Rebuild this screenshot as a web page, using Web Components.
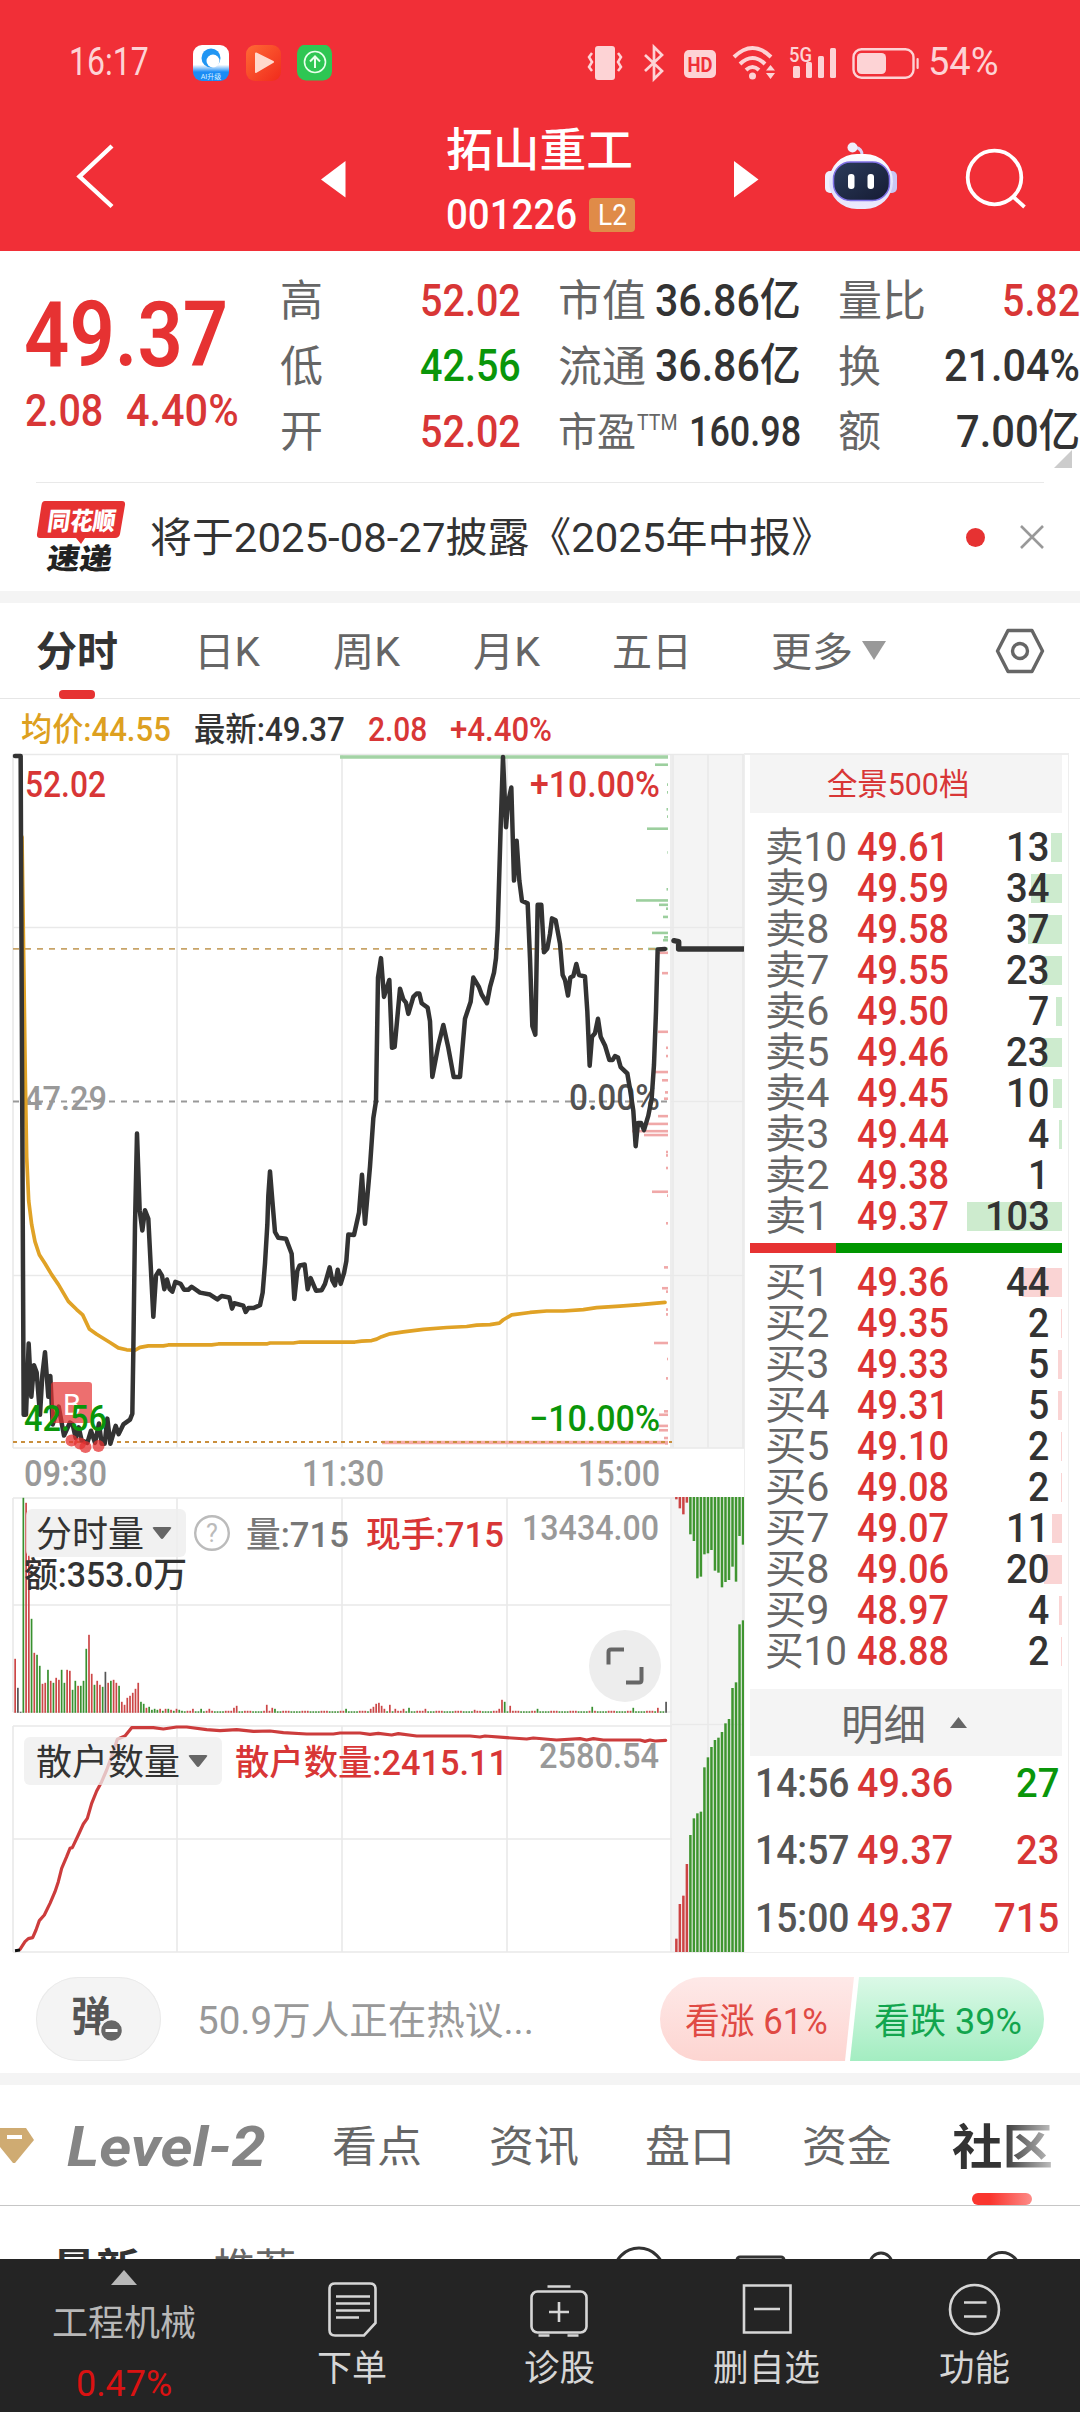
<!DOCTYPE html>
<html lang="zh-CN">
<head>
<meta charset="utf-8">
<title>拓山重工 001226</title>
<style>
  html, body { margin: 0; padding: 0; }
  body {
    width: 1080px;
    height: 2412px;
    overflow: hidden;
    background: #fff;
    color: #333;
    font-family: Roboto, "Noto Sans CJK SC", sans-serif;
  }
</style>
</head>
<body>
<stock-page></stock-page>

<script>
// small helper: every component is a class with one template
function component(name, html, setup) {
  customElements.define(name, class extends HTMLElement {
    constructor() {
      super();
      const shadow = this.attachShadow({ mode: 'open' });
      const template = document.createElement('template');
      template.innerHTML = html;
      shadow.appendChild(template.content.cloneNode(true));
    }
    connectedCallback() {
      if (setup) setup.call(this, this.shadowRoot);
    }
  });
}

// text squeezed to a fixed width: w = width, fs = font size, gap = space before
class FitText extends HTMLElement {
  constructor() {
    super();
    this.attachShadow({ mode: 'open' }).innerHTML = `
      <style>
        :host { display: block; flex: none; line-height: 1.2; white-space: nowrap; }
        span { display: inline-block; transform-origin: 0 50%; }
      </style>
      <span><slot></slot></span>
    `;
  }

  connectedCallback() {
    const w = Number(this.getAttribute('w'));
    this.style.width = w + 'px';
    this.style.fontSize = this.getAttribute('fs') + 'px';
    if (this.hasAttribute('gap')) this.style.marginLeft = this.getAttribute('gap') + 'px';
    const span = this.shadowRoot.querySelector('span');
    const natural = span.offsetWidth;
    if (natural) span.style.transform = `scaleX(${w / natural})`;
  }
}
customElements.define('fit-text', FitText);

component('status-bar', `
  <style>
    :host { display: flex; align-items: center; height: 125px; color: #fdd3d5; }
    svg { display: block; flex: none; }
  </style>
  <fit-text w="80" fs="38" gap="69">16:17</fit-text>
  <svg width="140" height="36" viewBox="193 45 140 36" style="margin-left:44px">
    <defs>
      <linearGradient id="b" x2="0" y2="1"><stop offset=".55" stop-color="#fff"/><stop offset=".75" stop-color="#1b8cf5"/></linearGradient>
      <linearGradient id="o" x2="1" y2="1"><stop stop-color="#ff6a35"/><stop offset="1" stop-color="#f02a1c"/></linearGradient>
    </defs>
    <rect x="193" y="45" width="36" height="36" rx="9" fill="url(#b)"/>
    <circle cx="211" cy="58" r="9.5" fill="#2196f3"/>
    <circle cx="213" cy="61" r="6.5" fill="#fff"/>
    <text x="211" y="79" font-size="7" text-anchor="middle" fill="#d8efff">AI升级</text>
    <rect x="246" y="45" width="35" height="36" rx="9" fill="url(#o)"/>
    <path d="M256 53.500 L273 62 L256 72 Z" fill="#ffd9cc" stroke="#ffd9cc" stroke-width="2" stroke-linejoin="round"/>
    <rect x="297" y="44.500" width="35" height="36" rx="9" fill="#2ec653"/>
    <circle cx="315" cy="62" r="10.500" fill="none" stroke="#e8ffec" stroke-width="1.600"/>
    <path d="M315 68V56.500M310 61.500L315 56.500L320 61.500" fill="none" stroke="#e8ffec" stroke-width="2"/>
  </svg>
  <svg width="336" height="40" viewBox="585 42 336 40" style="margin-left:252px" fill="#fdd3d5">
    <rect x="595" y="45" width="20" height="34" rx="3"/>
    <path d="M592 52l-3 4 3 5-3 5 3 4M618 52l3 4-3 5 3 5-3 4" fill="none" stroke="#fdd3d5" stroke-width="2.500"/>
    <path d="M645 54L662 70L654 78V46L662 54L645 70" fill="none" stroke="#fdd3d5" stroke-width="2.700"/>
    <rect x="684" y="49" width="32" height="28" rx="5"/>
    <text x="687.500" y="71" font-size="21" font-weight="700" fill="#f03037" textLength="25" lengthAdjust="spacingAndGlyphs">HD</text>
    <g fill="none" stroke="#fdd3d5" stroke-width="4">
      <path d="M734 56Q752.500 38 771 56M740 63Q752.500 51 765 63M746 69Q752.500 63 759 69"/>
    </g>
    <circle cx="752.500" cy="75" r="3.500"/>
    <path d="M766 69.500L770.500 64L775 69.500ZM766 72L775 72L770.500 78Z"/>
    <text x="789" y="61" font-size="20" font-weight="500" textLength="23" lengthAdjust="spacingAndGlyphs">5G</text>
    <rect x="793" y="65" width="7" height="12" rx="1.500"/><rect x="806" y="61" width="6" height="16" rx="1.500"/>
    <rect x="818" y="55" width="6" height="22" rx="1.500"/><rect x="830" y="47" width="6" height="30" rx="1.500"/>
    <rect x="853.500" y="48.200" width="60" height="28.500" rx="8" fill="none" stroke="#fdd3d5" stroke-width="2.400"/>
    <rect x="857" y="52" width="29" height="21" rx="4.500"/>
    <rect x="916.500" y="57" width="2.200" height="11" rx="1"/>
  </svg>
  <fit-text w="71" fs="38" gap="7">54%</fit-text>
`);

component('nav-header', `
  <style>
    :host { display: flex; height: 126px; color: #fff; align-items: flex-start; }
    svg { display: block; flex: none; }
    .title { display: flex; flex-direction: column; width: 192px; margin-left: 101px; }
    .code { display: flex; align-items: center; margin-top: 13px; height: 34px; }
    .badge {
      display: flex; align-items: center; justify-content: center;
      width: 46px; height: 34px; margin-left: 12px; border-radius: 4px; background: #e08b48;
    }
    fit-text { font-weight: 500; }
    .badge fit-text { font-weight: 400; }
  </style>
  <svg width="44" height="70" viewBox="72 142 44 70" style="margin:17px 0 0 72px"><path d="M112 146L79.500 176.500L112 206.500" fill="none" stroke="#fff" stroke-width="4.400"/></svg>
  <svg width="25" height="37" viewBox="0 0 25 37" style="margin:36px 0 0 205px"><path d="M24.500 0V36.500L0 18.500Z" fill="#fff"/></svg>
  <div class="title">
    <fit-text w="187" fs="46" gap="-1" style="line-height:69px;height:69px;margin-top:-9px">拓山重工</fit-text>
    <div class="code"><fit-text w="131" fs="42" gap="-1">001226</fit-text><span class="badge"><fit-text w="29" fs="29">L2</fit-text></span></div>
  </div>
  <svg width="25" height="37" viewBox="0 0 25 37" style="margin:36px 0 0 95px"><path d="M0 0V36.500L24.500 18.500Z" fill="#fff"/></svg>
  <svg width="76" height="70" viewBox="823 141 76 70" style="margin:16px 0 0 64px">
    <defs>
      <linearGradient id="h" x2="0" y2="1"><stop stop-color="#fff"/><stop offset=".6" stop-color="#dfe0fb"/><stop offset="1" stop-color="#eceafd"/></linearGradient>
      <linearGradient id="f" x2="1" y2="1"><stop stop-color="#2c3c5c"/><stop offset="1" stop-color="#151b33"/></linearGradient>
    </defs>
    <path d="M862 156Q863 149 855 147" fill="none" stroke="#d9d5f8" stroke-width="3"/>
    <circle cx="852.500" cy="147.500" r="5" fill="#efeffd"/>
    <rect x="825" y="171" width="11" height="22" rx="5" fill="#f0effd"/><rect x="886" y="171" width="11" height="22" rx="5" fill="#c9c6f3"/>
    <rect x="829" y="154" width="64" height="55" rx="28" fill="url(#h)"/>
    <rect x="833.500" y="162" width="56" height="38.500" rx="17" fill="url(#f)" stroke="#8070e6" stroke-width="1.500"/>
    <rect x="848" y="174" width="6.500" height="15" rx="3" fill="#fff"/><rect x="867.500" y="174" width="6.500" height="15" rx="3" fill="#fff"/>
  </svg>
  <svg width="66" height="66" viewBox="963 146 66 66" style="margin:21px 0 0 64px" fill="none" stroke="#fff" stroke-width="3.800">
    <circle cx="994.500" cy="177.500" r="26.800"/><path d="M1013 196.500L1024.500 207"/>
  </svg>
`);

component('quote-cell', `
  <style>
    :host { display: flex; align-items: center; justify-content: space-between; }
    ::slotted(fit-text:last-child) { font-weight: 500; }
    ::slotted(fit-text:first-child) { color: #666; font-weight: 400; padding: 3px 0 0 1px; }
  </style>
  <slot></slot>
`);

component('quote-panel', `
  <style>
    :host { display: flex; height: 232px; position: relative; }
    .price { width: 254px; padding-left: 26px; color: #e63232; box-sizing: border-box; }
    .now { font-weight: 600; margin-top: 31px; }
    .change { display: flex; font-weight: 500; margin-top: -5px; color: #d83636; }
    .grid {
      display: grid; grid-template-columns: 242px 244px 243px; column-gap: 36px;
      grid-auto-rows: 65.500px; margin-left: 26px; margin-top: 17px; height: 197px;
    }
    .r { color: #d83636; } .g { color: #0a960a; }
    .ttm { display: flex; margin-right: auto; }
    .corner { position: absolute; right: 8px; bottom: 15px; }
    .rule { position: absolute; left: 36px; right: 36px; bottom: 0; height: 1px; background: #e9e9e9; }
  </style>
  <div class="price">
    <fit-text class="now" w="204" fs="90" gap="-2">49.37</fit-text>
    <div class="change"><fit-text w="78" fs="44" gap="-1">2.08</fit-text><fit-text w="113" fs="44" gap="23">4.40%</fit-text></div>
  </div>
  <div class="grid">
    <quote-cell><fit-text w="43" fs="43">高</fit-text><fit-text class="r" w="101" fs="45">52.02</fit-text></quote-cell>
    <quote-cell><fit-text w="88" fs="43">市值</fit-text><fit-text w="146" fs="45">36.86亿</fit-text></quote-cell>
    <quote-cell><fit-text w="88" fs="43">量比</fit-text><fit-text class="r" w="78" fs="45">5.82</fit-text></quote-cell>
    <quote-cell><fit-text w="43" fs="43">低</fit-text><fit-text class="g" w="101" fs="45">42.56</fit-text></quote-cell>
    <quote-cell><fit-text w="88" fs="43">流通</fit-text><fit-text w="146" fs="45">36.86亿</fit-text></quote-cell>
    <quote-cell><fit-text w="43" fs="43">换</fit-text><fit-text w="136" fs="45">21.04%</fit-text></quote-cell>
    <quote-cell><fit-text w="43" fs="43">开</fit-text><fit-text class="r" w="101" fs="45">52.02</fit-text></quote-cell>
    <quote-cell><fit-text w="78" fs="40">市盈</fit-text><span class="ttm"><fit-text w="41" fs="22" gap="1" style="margin-top:-17px;color:#666">TTM</fit-text></span><fit-text w="112" fs="43">160.98</fit-text></quote-cell>
    <quote-cell><fit-text w="43" fs="43">额</fit-text><fit-text w="124" fs="45">7.00亿</fit-text></quote-cell>
  </div>
  <svg class="corner" width="18" height="18"><path d="M18 0V18H0Z" fill="#ccc"/></svg>
  <div class="rule"></div>
`);

component('notice-bar', `
  <style>
    :host { display: flex; align-items: center; height: 108px; border-bottom: 12px solid #f4f4f4; }
    svg { display: block; flex: none; overflow: visible; }
    i { width: 19px; height: 19px; border-radius: 50%; background: #e63232; margin-left: 133px; }
    fit-text { padding-top: 4px; }
  </style>
  <svg width="90" height="80" viewBox="36 497 90 80" style="margin-left:36px">
    <path d="M45 501H122Q125.500 501 125 505L120 534Q119 538 115 538H85L81 544L76 538H40Q36.500 538 37 534L41.500 505Q42 501 45 501Z" fill="#e63232"/>
    <g transform="skewX(-8)" font-weight="900">
      <text x="121" y="530" font-size="25" fill="#fff" textLength="68" lengthAdjust="spacingAndGlyphs">同花顺</text>
      <text x="126" y="569" font-size="29" fill="#222" textLength="65" lengthAdjust="spacingAndGlyphs">速递</text>
    </g>
  </svg>
  <fit-text w="683" fs="41" gap="24">将于2025-08-27披露《2025年中报》</fit-text>
  <i></i>
  <svg width="26" height="26" viewBox="0 0 26 26" style="margin-left:34px"><path d="M2 2L24 24M24 2L2 24" stroke="#999" stroke-width="2.600"/></svg>
`);

component('period-tabs', `
  <style>
    :host { display: flex; align-items: center; height: 95px; border-bottom: 1px solid #e6e6e6; color: #666; }
    fit-text { padding-top: 5px; }
    .on { position: relative; color: #333; font-weight: 700; }
    .on::after { content: ""; position: absolute; left: 23px; bottom: -21px; width: 36px; height: 9px; border-radius: 4px; background: #e63232; }
    svg { display: block; flex: none; }
  </style>
  <fit-text class="on" w="82" fs="41" gap="36">分时</fit-text>
  <fit-text w="66" fs="40" gap="76">日K</fit-text>
  <fit-text w="67" fs="40" gap="73">周K</fit-text>
  <fit-text w="67" fs="40" gap="73">月K</fit-text>
  <fit-text w="80" fs="40" gap="72">五日</fit-text>
  <fit-text w="82" fs="40" gap="79">更多</fit-text>
  <svg width="24" height="19" style="margin-left:9px"><path d="M0 0H24L12 19Z" fill="#999"/></svg>
  <svg width="50" height="46" viewBox="-25 -23 50 46" style="margin-left:109px" fill="none" stroke="#666" stroke-width="3.400">
    <path d="M-12 -20.500H12L22.500 0L12 20.500H-12L-22.500 0Z" stroke-linejoin="round"/><circle r="7.500"/>
  </svg>
`);

component('price-legend', `
  <style>
    :host { display: flex; align-items: center; height: 54px; padding-top: 7px; box-sizing: border-box; }
    fit-text { font-weight: 500; }
  </style>
  <fit-text w="150" fs="33" gap="21" style="color:#dda020">均价:44.55</fit-text>
  <fit-text w="151" fs="33" gap="23">最新:49.37</fit-text>
  <fit-text w="59" fs="33" gap="23" style="color:#d83636">2.08</fit-text>
  <fit-text w="102" fs="33" gap="23" style="color:#d83636">+4.40%</fit-text>
`);

const PRICE = '45,33 62,33 63,200 67,800 71,1392 78,1392 86,1245 94,1355 102,1290 110,1305 120,1392 127,1310 135,1263 145,1355 151,1312 158,1412 166,1395 176,1375 192,1435 210,1408 218,1412 227,1440 236,1418 245,1445 262,1450 273,1425 285,1450 297,1410 305,1452 314,1452 322,1400 331,1452 347,1415 356,1432 370,1412 390,1402 397,1390 400,1260 405,1000 411,812 419,970 427,1012 435,970 445,988 460,1190 468,1105 477,1095 486,1105 493,1133 501,1113 509,1133 517,1138 526,1118 542,1122 552,1134 565,1134 575,1128 600,1140 630,1144 652,1154 665,1147 688,1150 696,1173 703,1162 730,1167 737,1180 745,1172 760,1172 780,1166 788,1140 795,1080 802,1000 805,940 810,890 817,950 825,1015 835,1027 858,1029 875,1060 883,1153 892,1095 899,1084 914,1082 923,1133 932,1110 948,1136 965,1135 975,1122 989,1088 997,1115 1005,1125 1013,1093 1022,1122 1032,1100 1039,1075 1045,1020 1062,1021 1077,975 1086,897 1095,998 1110,880 1120,780 1128,745 1134,490 1143,450 1152,530 1168,495 1176,635 1184,633 1200,513 1210,535 1218,542 1225,565 1240,530 1250,523 1258,523 1265,543 1283,552 1290,580 1297,695 1315,630 1330,588 1345,635 1361,695 1380,695 1395,575 1412,540 1420,490 1437,510 1445,525 1461,543 1470,510 1482,480 1488,450 1493,390 1502,180 1509,35 1518,180 1524,130 1534,98 1542,290 1550,208 1558,290 1566,332 1583,337 1590,450 1597,590 1606,608 1613,340 1624,340 1632,438 1642,430 1650,400 1656,368 1667,372 1680,420 1688,485 1695,495 1704,527 1711,490 1720,487 1729,462 1737,485 1755,488 1762,560 1769,672 1776,612 1785,605 1794,575 1802,612 1815,630 1828,660 1838,660 1845,652 1854,655 1862,675 1882,688 1890,720 1900,765 1907,838 1914,790 1923,790 1932,805 1945,775 1955,740 1962,670 1968,560 1973,432 1995,431';
const AVERAGE = '66,200 70,400 76,700 80,860 86,950 95,1000 105,1035 118,1062 135,1080 155,1103 175,1123 205,1158 230,1175 248,1186 268,1215 290,1226 330,1243 355,1254 380,1258 405,1259 420,1253 445,1250 490,1250 505,1248 635,1248 655,1246 800,1246 810,1244 880,1244 900,1242 1065,1242 1085,1240 1115,1239 1130,1236 1145,1231 1170,1225 1210,1221 1270,1216 1340,1212 1400,1210 1430,1207 1470,1206 1498,1203 1510,1196 1535,1186 1590,1181 1640,1178 1690,1178 1750,1175 1790,1171 1860,1168 1920,1165 1995,1160';
const RETAIL = '60,1378 75,1355 85,1346 98,1343 108,1320 118,1292 133,1275 150,1240 165,1205 175,1175 185,1135 200,1100 210,1075 217,1073 235,1035 250,1002 262,985 275,940 290,903 305,875 320,840 340,785 352,748 375,738 395,713 460,713 490,717 530,711 560,711 620,719 660,722 710,719 760,724 810,723 850,728 920,732 1000,732 1020,729 1080,729 1110,733 1135,730 1175,735 1195,731 1250,738 1410,738 1440,741 1455,738 1520,743 1580,747 1600,744 1670,750 1740,746 1760,750 1780,746 1810,750 1920,750 1935,754 1950,750 1965,753 1997,751';

// resting orders on the right edge of the chart: [y, length]
const DEPTH_SELL = [[51,13],[92,1],[108,1],[143,1.5],[158,1],[183,21],[232,.6],[308,1.5],[331,32],[340,9],[348,2],[365,5],[398,16],[407,4],[413,5],[431,20]];
const DEPTH_BUY = [[439,10],[481,6],[602,10],[635,2],[652,2],[685,13],[702,6],[727,3],[740,4],[776,10],[792,20],[807,36],[815,24],[850,2],[857,2],[883,2],[932,16],[940,1],[997,2],[1088,4],[1131,6],[1138,2],[1175,2],[1185,2],[1244,14],[1277,1],[1317,2],[1385,4],[1392,9],[1415,12],[1424,9],[1440,4],[1451,3]];

// per minute volume, height and colour
const VOLUME = '54r 25k 1k 215g 210r 158r 94g 60r 58g 47g 29r 30r 43g 32r 30g 35r 33r 43g 30g 43r 42r 23g 32g 27r 27g 32g 64g 78r 39r 28g 32r 28r 26g 41k 30r 32g 33r 30r 27g 11r 8r 15r 17r 20r 24r 30r 11g 9g 5r 6g 3g 4g 3g 4r 2g 4r 4g 3r 2g 4r 3g 2g'.split(' ');
const SPIKES = { 65: '4r', 68: '4g', 71: '4r', 80: '5r', 81: '7r', 92: '8r', 94: '5r', 95: '4g', 121: '4g', 130: '4r', 131: '6r', 132: '9r', 133: '10r', 134: '7r', 135: '4r', 137: '8r', 139: '4r', 142: '4r', 144: '5g', 150: '4r', 168: '3r', 177: '4r', 178: '13r', 179: '11g', 181: '7r', 191: '4g', 211: '6g', 226: '5g', 235: '5r', 238: '11k' };
const TINTS = { r: '#cc4747', g: '#38902f', k: '#555' };

const UPPER = [28,55,73,38,133,153,265,260,193,190,180,242,248,292,276,270,230,275,138,164];
const LOWER = [1346,1242,1217,1122,1035,985,970,965,832,802,771,750,743,726,700,687,594,577,403,391];

component('intraday-chart', `
  <style>
    :host { display: block; flex: none; width: 744px; height: 1200px; }
    svg { display: block; }
    .grid path { stroke: #e9e9e9; stroke-width: 1.600; fill: none; }
    .line { fill: none; stroke-linejoin: round; stroke-linecap: round; vector-effect: non-scaling-stroke; }
    text { font-weight: 500; }
    .r { fill: #d83636; } .g { fill: #0a960a; } .m { fill: #999; }
  </style>
  <svg width="744" height="1200" viewBox="0 753 744 1200">
    <rect x="672" y="755" width="72" height="693" fill="#f4f4f4"/>
    <rect x="672" y="1497" width="72" height="455" fill="#f4f4f4"/>
    <g class="grid">
      <path d="M13 754.500H744M13 927.500H744M671 1101.500H744M13 1275.500H744M13 1448H744M13 754V1448M177 754V1448M342 754V1448M507 754V1448M671 754V1448M673 754V1448M708 754V1448M743 754V1448"/>
      <path d="M13 1498H744M13 1605H672M13 1712H672M13 1726H672M672 1724.500H744M13 1839H672M13 1952H744M13 1498V1712M177 1498V1712M342 1498V1712M507 1498V1712M13 1726V1952M177 1726V1952M342 1726V1952M507 1726V1952M671 1498V1952M708 1498V1952M743 1498V1952"/>
    </g>
    <path d="M340 757H668" stroke="#a3d3a5" stroke-width="3.500"/>
    <path d="M382 1442.500H668" stroke="#f6aaa6" stroke-width="3.500"/>
    <g id="depth"></g>
    <g fill="none" stroke-width="1.800">
      <path d="M13 948.800H668" stroke="#c8a468" stroke-dasharray="6 6"/>
      <path d="M13 1101.500H668" stroke="#999" stroke-dasharray="6 6"/>
      <path d="M13 1442H672" stroke="#c98f3d" stroke-dasharray="4 4"/>
    </g>
    <text class="m" x="24" y="1110" font-size="34" textLength="83" lengthAdjust="spacingAndGlyphs">47.29</text>
    <g transform="translate(0 740) scale(.33333 .48473)">
      <polyline class="line" points="${AVERAGE}" stroke="#e0a226" stroke-width="3.700"/>
      <polyline class="line" points="${PRICE}" stroke="#333" stroke-width="4.500"/>
      <polyline class="line" points="2022,414 2036,416 2036,431 2230,431" stroke="#333" stroke-width="5.500"/>
    </g>
    <g fill="#e63232" fill-opacity=".75">
      <rect x="51" y="1382" width="41" height="41" rx="3" fill-opacity=".7"/>
      <circle cx="71.500" cy="1440.500" r="6"/><circle cx="80" cy="1443.500" r="6"/><circle cx="85.500" cy="1447" r="6"/><circle cx="98.500" cy="1446" r="6"/>
    </g>
    <text x="63" y="1415" font-size="30" textLength="18" lengthAdjust="spacingAndGlyphs" fill="#fff" style="font-weight:400">B</text>
    <g font-size="36">
      <text class="r" x="25" y="797" textLength="81" lengthAdjust="spacingAndGlyphs">52.02</text>
      <text class="g" x="24" y="1431" textLength="83" lengthAdjust="spacingAndGlyphs">42.56</text>
      <text class="r" x="530" y="797" textLength="130" lengthAdjust="spacingAndGlyphs">+10.00%</text>
      <text x="569" y="1110" textLength="91" fill="#333" fill-opacity=".85" lengthAdjust="spacingAndGlyphs">0.00%</text>
      <text class="g" x="529" y="1431" textLength="131" lengthAdjust="spacingAndGlyphs">−10.00%</text>
      <text class="m" x="24" y="1486" textLength="83" lengthAdjust="spacingAndGlyphs">09:30</text>
      <text class="m" x="302" y="1486" textLength="82" lengthAdjust="spacingAndGlyphs">11:30</text>
      <text class="m" x="578" y="1486" textLength="82" lengthAdjust="spacingAndGlyphs">15:00</text>
    </g>

    <g id="volume"></g>
    <rect x="26" y="1509" width="160" height="48" rx="6" fill="#eeeeee" fill-opacity=".8"/>
    <g font-size="35">
      <text x="36" y="1547" font-size="36" textLength="108" lengthAdjust="spacingAndGlyphs" fill="#333" style="font-weight:400">分时量</text>
      <text x="246" y="1547" textLength="103" lengthAdjust="spacingAndGlyphs" fill="#777">量:715</text>
      <text class="r" x="366" y="1547" textLength="138" lengthAdjust="spacingAndGlyphs">现手:715</text>
      <text class="m" x="522" y="1540" textLength="137" lengthAdjust="spacingAndGlyphs">13434.00</text>
      <text x="24" y="1587" textLength="163" lengthAdjust="spacingAndGlyphs" fill="#333">额:353.0万</text>
    </g>
    <path d="M154 1527H170Q172 1527 171 1528.500L163.500 1538Q162 1540 160.500 1538L153 1528.500Q152 1527 154 1527Z" fill="#666"/>
    <circle cx="212" cy="1533" r="16.800" fill="none" stroke="#bbb" stroke-width="2.400"/>
    <text x="212" y="1542" font-size="25" text-anchor="middle" fill="#bbb" style="font-weight:400">?</text>
    <circle cx="625" cy="1666" r="36" fill="#ededed"/>
    <path d="M608.500 1664.500V1652Q608.500 1649.500 611 1649.500H624M641.500 1667V1680Q641.500 1682.500 639 1682.500H626" fill="none" stroke="#666" stroke-width="4"/>

    <g transform="translate(0 1490) scale(.33333)">
      <polyline class="line" points="${RETAIL}" stroke="#cc3c3c" stroke-width="3.200"/>
      <path d="M45 1382L60 1380" stroke="#111" stroke-width="9"/>
    </g>
    <rect x="24" y="1737" width="198" height="48" rx="6" fill="#eeeeee" fill-opacity=".75"/>
    <text x="36" y="1775" font-size="36" textLength="144" lengthAdjust="spacingAndGlyphs" fill="#333" style="font-weight:400">散户数量</text>
    <path d="M190 1755H206Q208 1755 207 1756.500L199.500 1766Q198 1768 196.500 1766L189 1756.500Q188 1755 190 1755Z" fill="#666"/>
    <text class="r" x="235" y="1775" font-size="35" textLength="273" lengthAdjust="spacingAndGlyphs">散户数量:2415.11</text>
    <text class="m" x="539" y="1768" font-size="35" textLength="120" lengthAdjust="spacingAndGlyphs">2580.54</text>
    <g id="flow"></g>
  </svg>
`, function (root) {
  const bar = (x, y, w, h, fill) => `<rect x="${x}" y="${y}" width="${w}" height="${h}" fill="${fill}"/>`;
  const side = (rows, fill) => rows.map(([y, len]) => bar(668 - len, 738.700 + y / 2.063, len, 2.600, fill)).join('');
  root.getElementById('depth').innerHTML = side(DEPTH_SELL, '#9ccf9e') + side(DEPTH_BUY, '#f0a8a8');

  let out = '';
  for (let i = 0; i < 239; i++) {
    const item = VOLUME[i] || SPIKES[i] || (i % 7 < 3 ? '2r' : '1.5g');
    const h = parseFloat(item);
    out += bar(14.300 + i * 2.735, 1712.800 - h, 1.700, h, TINTS[item.slice(-1)]);
  }
  root.getElementById('volume').innerHTML = out;

  root.getElementById('flow').innerHTML = UPPER.map((end, i) => {
    const x = 675.100 + i * 3.510;
    const fill = i < 4 ? '#cc4444' : '#3f9530';
    const top = 1490 + LOWER[i] / 3;
    return bar(x, 1497, 2.500, end / 3 - 7, fill) + bar(x, top, 2.500, 1952 - top, fill);
  }).join('');
});

class OrderRow extends HTMLElement {
  constructor() {
    super();
    this.attachShadow({ mode: 'open' });
  }

  connectedCallback() {
    const label = this.getAttribute('label');
    const qty = this.getAttribute('qty');
    const w = label.length > 2 ? 82 : 64;
    this.shadowRoot.innerHTML = `
      <style>
        :host { display: grid; grid-template-columns: 92px 94px 1fr; align-items: center; height: 41px; padding-left: 15px; }
        fit-text { line-height: 1; }
        .label { color: #666; }
        .price { color: #dc3434; font-weight: 500; }
        .qty {
          display: flex; justify-content: flex-end; align-items: center; height: 29px;
          padding-right: 13px; font-weight: 500;
          background: linear-gradient(var(--bar), var(--bar)) no-repeat right / ${this.getAttribute('bar')}px 100%;
        }
      </style>
      <fit-text class="label" w="${w}" fs="40">${label}</fit-text>
      <fit-text class="price" w="92" fs="40">${this.getAttribute('price')}</fit-text>
      <div class="qty"><fit-text w="${qty.length * 21.500}" fs="40">${qty}</fit-text></div>
    `;
  }
}
customElements.define('order-row', OrderRow);

component('trade-row', `
  <style>
    :host { display: flex; align-items: center; height: 67.5px; font-weight: 500; padding-left: 5px; }
  </style>
  <slot></slot>
`);

component('order-book', `
  <style>
    :host {
      display: block; box-sizing: border-box; width: 325px; height: 1200px;
      border: 1px solid #eee; border-top: 2px solid #eee; padding: 0 6px 0 5px; overflow: hidden;
    }
    .head { display: flex; align-items: center; justify-content: center; background: #f4f4f4; }
    .full { height: 58px; color: #d83636; padding-right: 16px; }
    .full fit-text { padding-top: 2px; }
    .sell { --bar: #cdebce; margin-top: 14px; }
    .buy { --bar: #fad4d4; margin-top: 9px; }
    .ratio { display: flex; height: 10px; margin-top: 6px; background: #009600; }
    .ratio i { width: 86px; background: #e63232; }
    .detail { height: 67px; margin-top: 17px; color: #666; padding-right: 4px; box-sizing: border-box; }
    .detail fit-text { padding-top: 8px; }
    .trades { margin-top: -6px; color: #555; }
    .r { color: #d83636; } .g { color: #0a960a; }
  </style>
  <div class="head full"><fit-text w="142" fs="31">全景500档</fit-text></div>
  <div class="sell">
    <order-row label="卖10" price="49.61" qty="13" bar="11"></order-row>
    <order-row label="卖9" price="49.59" qty="34" bar="31"></order-row>
    <order-row label="卖8" price="49.58" qty="37" bar="34"></order-row>
    <order-row label="卖7" price="49.55" qty="23" bar="20"></order-row>
    <order-row label="卖6" price="49.50" qty="7" bar="6"></order-row>
    <order-row label="卖5" price="49.46" qty="23" bar="20"></order-row>
    <order-row label="卖4" price="49.45" qty="10" bar="9"></order-row>
    <order-row label="卖3" price="49.44" qty="4" bar="3"></order-row>
    <order-row label="卖2" price="49.38" qty="1" bar="0"></order-row>
    <order-row label="卖1" price="49.37" qty="103" bar="95"></order-row>
  </div>
  <div class="ratio"><i></i></div>
  <div class="buy">
    <order-row label="买1" price="49.36" qty="44" bar="40"></order-row>
    <order-row label="买2" price="49.35" qty="2" bar="1"></order-row>
    <order-row label="买3" price="49.33" qty="5" bar="4"></order-row>
    <order-row label="买4" price="49.31" qty="5" bar="4"></order-row>
    <order-row label="买5" price="49.10" qty="2" bar="1"></order-row>
    <order-row label="买6" price="49.08" qty="2" bar="1"></order-row>
    <order-row label="买7" price="49.07" qty="11" bar="10"></order-row>
    <order-row label="买8" price="49.06" qty="20" bar="18"></order-row>
    <order-row label="买9" price="48.97" qty="4" bar="3"></order-row>
    <order-row label="买10" price="48.88" qty="2" bar="1"></order-row>
  </div>
  <div class="head detail">
    <fit-text w="85" fs="42">明细</fit-text>
    <svg width="17" height="11" style="margin-left:24px"><path d="M0 11L8.500 0L17 11Z" fill="#666"/></svg>
  </div>
  <div class="trades">
    <trade-row><fit-text w="94" fs="40">14:56</fit-text><fit-text class="r" w="96" fs="40" gap="8">49.36</fit-text><fit-text class="g" w="43" fs="40" gap="63">27</fit-text></trade-row>
    <trade-row><fit-text w="94" fs="40">14:57</fit-text><fit-text class="r" w="96" fs="40" gap="8">49.37</fit-text><fit-text class="r" w="43" fs="40" gap="63">23</fit-text></trade-row>
    <trade-row><fit-text w="94" fs="40">15:00</fit-text><fit-text class="r" w="96" fs="40" gap="8">49.37</fit-text><fit-text class="r" w="65" fs="40" gap="41">715</fit-text></trade-row>
  </div>
`);

component('talk-bar', `
  <style>
    :host { display: flex; height: 96px; border-bottom: 12px solid #f4f4f4; padding-top: 24px; }
    .pill { width: 125px; height: 84px; border-radius: 42px; background: #f4f4f4; box-shadow: inset 0 0 0 1px #eaeaea; margin-left: 36px; }
    .talk { color: #999; line-height: 88px; }
    .vote { display: flex; width: 384px; height: 84px; margin-left: 126px; border-radius: 42px; overflow: hidden; }
    .up, .down { display: flex; width: 194px; }
    .up { color: #e04a44; background: linear-gradient(#fee9e8, #fdd5d1); clip-path: polygon(0 0, 100% 0, 185px 100%, 0 100%); }
    .down { margin-left: -4px; color: #12a54e; background: linear-gradient(#dbf9e7, #a3edc1); clip-path: polygon(9px 0, 100% 0, 100% 100%, 0 100%); }
    .vote fit-text { line-height: 90px; }
  </style>
  <div class="pill">
    <svg width="125" height="84" viewBox="36 1977 125 84">
      <text x="71" y="2031" font-size="41" font-weight="700" fill="#555" textLength="40" lengthAdjust="spacingAndGlyphs">弹</text>
      <circle cx="111.500" cy="2030.500" r="11.500" fill="#666" stroke="#f4f4f4" stroke-width="2.500"/>
      <path d="M105.500 2030.500H117.500" stroke="#fff" stroke-width="3"/>
    </svg>
  </div>
  <fit-text class="talk" w="337" fs="39" gap="36">50.9万人正在热议...</fit-text>
  <div class="vote">
    <div class="up"><fit-text w="143" fs="36" gap="25">看涨 61%</fit-text></div>
    <div class="down"><fit-text w="148" fs="36" gap="24">看跌 39%</fit-text></div>
  </div>
`);

component('section-tabs', `
  <style>
    :host { display: flex; align-items: center; height: 120px; border-bottom: 1px solid #c6c6c6; color: #666; }
    fit-text { padding-top: 6px; }
    .level { font-weight: 700; font-style: italic; color: #858585; }
    .tab { position: relative; margin-left: 60px; }
    .tab::after { content: ""; position: absolute; left: 20px; bottom: -28px; width: 60px; height: 12px; border-radius: 6px; background: linear-gradient(90deg, #fa352e 30%, #fd8c88); }
    .tab::before { content: ""; position: absolute; z-index: 1; inset: 0 0 0 50px; background: linear-gradient(90deg, rgba(255,255,255,0), rgba(255,255,255,.7)); }
    .tab fit-text { font-weight: 700; color: #333; }
    svg { display: block; flex: none; }
  </style>
  <svg width="34" height="37" viewBox="0 0 34 37"><path d="M0 1H26L34 13L15 36H13L0 20Z" fill="#cfab72"/><path d="M7 10H22" stroke="#fff" stroke-width="4"/></svg>
  <fit-text class="level" w="199" fs="56" gap="33">Level-2</fit-text>
  <fit-text w="90" fs="43" gap="66">看点</fit-text>
  <fit-text w="90" fs="43" gap="67">资讯</fit-text>
  <fit-text w="90" fs="43" gap="66">盘口</fit-text>
  <fit-text w="90" fs="43" gap="67">资金</fit-text>
  <div class="tab"><fit-text w="101" fs="48">社区</fit-text></div>
`);

component('feed-head', `
  <style>
    :host { display: flex; height: 53px; overflow: hidden; }
    fit-text { margin-top: 39px; }
    .new { font-weight: 700; }
    .rec { color: #666; }
    svg { display: block; flex: none; margin-left: 312px; }
  </style>
  <fit-text class="new" w="88" fs="42" gap="52">最新</fit-text>
  <fit-text class="rec" w="82" fs="40" gap="74">推荐</fit-text>
  <svg width="430" height="53" viewBox="608 2206 430 53" fill="none" stroke="#333" stroke-width="3">
    <circle cx="639" cy="2273" r="25"/><rect x="737" y="2257" width="47" height="40" rx="3"/>
    <circle cx="881" cy="2264" r="11"/><circle cx="1002" cy="2270" r="17.500"/>
  </svg>
`);

component('bottom-item', `
  <style>
    :host { display: flex; flex-direction: column; align-items: center; width: 207.5px; color: #d6d6d6; }
    .icon { height: 89px; display: flex; align-items: flex-start; padding-top: 17px; box-sizing: border-box; }
    .icon ::slotted(svg) { fill: none; stroke: #d6d6d6; stroke-width: 2.600px; }
  </style>
  <div class="icon"><slot name="icon"></slot></div>
  <slot></slot>
`);

component('bottom-bar', `
  <style>
    :host { display: flex; height: 153px; background: #242424; }
    .sector { width: 248px; display: flex; flex-direction: column; align-items: center; color: #b8b8b8; }
  </style>
  <div class="sector">
    <svg width="26" height="15" style="margin-top:11px"><path d="M13 0L26 15H0Z" fill="#b8b8b8"/></svg>
    <fit-text w="144" fs="36" style="margin-top:18px">工程机械</fit-text>
    <fit-text w="96" fs="37" style="color:#da1212;margin-top:16px">0.47%</fit-text>
  </div>
  <bottom-item>
    <svg slot="icon" width="60" height="64" viewBox="322 2276 60 64"><path d="M335 2283.500H370Q375.500 2283.500 375.500 2289V2323L364 2335.500H335Q329.500 2335.500 329.500 2330V2289Q329.500 2283.500 335 2283.500ZM336 2296.500H370M336 2303.500H370M336 2310.500H370M336 2317.500H359"/></svg>
    <fit-text w="70" fs="36">下单</fit-text>
  </bottom-item>
  <bottom-item>
    <svg slot="icon" width="60" height="64" viewBox="529.500 2276 60 64"><rect x="532" y="2291.500" width="55" height="41" rx="6"/><path d="M548 2286.500H571M559.500 2302V2322M549.500 2312H569.500M539 2335.500H550M568 2335.500H579"/></svg>
    <fit-text w="71" fs="36">诊股</fit-text>
  </bottom-item>
  <bottom-item>
    <svg slot="icon" width="60" height="64" viewBox="737 2276 60 64"><path d="M744 2285.500H790.500V2332.500H744ZM754 2309H780"/></svg>
    <fit-text w="107" fs="36">删自选</fit-text>
  </bottom-item>
  <bottom-item>
    <svg slot="icon" width="60" height="64" viewBox="944.500 2276 60 64"><circle cx="975" cy="2309.500" r="24.500"/><path d="M964.500 2302.500H987M964.500 2316.500H987"/></svg>
    <fit-text w="71" fs="36">功能</fit-text>
  </bottom-item>
`);

component('stock-page', `
  <style>
    :host { display: block; width: 1080px; height: 2412px; overflow: hidden; }
    header { background: #f12f37; height: 251px; }
    main { display: flex; }
  </style>
  <header>
    <status-bar></status-bar>
    <nav-header></nav-header>
  </header>
  <quote-panel></quote-panel>
  <notice-bar></notice-bar>
  <period-tabs></period-tabs>
  <price-legend></price-legend>
  <main>
    <intraday-chart></intraday-chart>
    <order-book></order-book>
  </main>
  <talk-bar></talk-bar>
  <section-tabs></section-tabs>
  <feed-head></feed-head>
  <bottom-bar></bottom-bar>
`);
</script>
</body>
</html>
